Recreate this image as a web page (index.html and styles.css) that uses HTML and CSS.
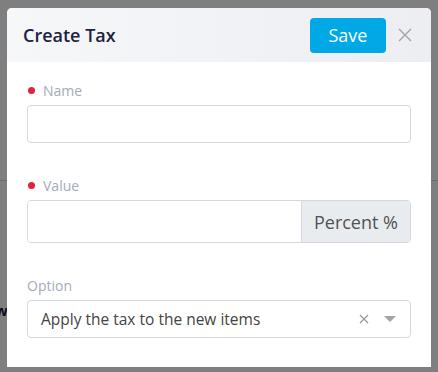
FILE: index.html
```html
<!DOCTYPE html>
<html lang="en">
<head>
    <meta charset="UTF-8">
    <meta name="viewport" content="width=device-width, initial-scale=1.0">
    <title>Create Tax</title>
    <link rel="stylesheet" href="styles.css">
</head>
<body>
    <!-- page behind the modal -->
    <div class="page">
        <div class="page-top"></div>
        <div class="page-row">New</div>
    </div>

    <div class="backdrop">
        <div class="modal">
            <div class="modal-header">
                <h2>Create Tax</h2>
                <button class="btn-save" type="button">Save</button>
                <span class="btn-close">
                    <svg width="14" height="14" viewBox="0 0 14 14"><path d="M1 1L13 13M13 1L1 13" stroke="#a3a3a3" stroke-width="1.4" fill="none"/></svg>
                </span>
            </div>
            <div class="modal-body">
                <div class="form-group">
                    <label class="required">Name</label>
                    <input type="text" class="field">
                </div>
                <div class="form-group">
                    <label class="required">Value</label>
                    <div class="input-group">
                        <input type="text" class="field">
                        <span class="addon">Percent %</span>
                    </div>
                </div>
                <div class="form-group">
                    <label>Option</label>
                    <div class="select">
                        <span class="select-value">Apply the tax to the new items</span>
                        <span class="select-clear">
                            <svg width="10" height="10" viewBox="0 0 10 10"><path d="M1 1L9 9M9 1L1 9" stroke="#999" stroke-width="1.3" fill="none"/></svg>
                        </span>
                        <span class="select-caret"></span>
                    </div>
                </div>
            </div>
        </div>
    </div>
</body>
</html>
```

FILE: styles.css
```css
body {
    margin: 0;
    font-family: "Open Sans", Arial, sans-serif;
    background: #fff;
    overflow: hidden;
}
.page-top {
    height: 180px;
    border-bottom: 1px solid #ddd;
}
.page-row {
    margin: 119px 0 0 -26px;
    font-weight: bold;
    font-size: 15px;
    color: #1e2240;
}
.backdrop {
    position: fixed;
    inset: 0;
    background: rgba(0, 0, 0, 0.5);
}
.modal {
    margin: 8px 7px 0;
    height: 359px;
    background: #fff;
    border-radius: 5px 5px 0 0;
    overflow: hidden;
}
.modal-header {
    display: flex;
    align-items: center;
    height: 54px;
    padding: 0 19px 0 16px;
    background: linear-gradient(to right, #f6f7f9, #eceef2);
}
.modal-header h2 {
    flex: 1;
    margin: 0;
    font-size: 18px;
    font-weight: 600;
    color: #1e2240;
}
.btn-save {
    width: 76px;
    height: 35px;
    border: none;
    border-radius: 4px;
    background: #00a8e6;
    color: #fff;
    font-family: inherit;
    font-size: 18px;
    padding: 0;
}
.btn-close {
    display: flex;
    margin-left: 12px;
}
.modal-body {
    padding: 19px 20px 0;
}
.form-group {
    margin-bottom: 33px;
}
label {
    display: flex;
    align-items: center;
    height: 19px;
    margin-bottom: 5px;
    font-size: 14px;
    color: #a4abb9;
}
label.required::before {
    content: "";
    width: 7px;
    height: 7px;
    border-radius: 50%;
    background: #e2233b;
    margin: 0 8px 0 1px;
}
.field {
    display: block;
    width: 100%;
    height: 38px;
    box-sizing: border-box;
    border: 1px solid #d4d8de;
    border-radius: 4px;
    font-family: inherit;
    font-size: 16px;
}
.input-group {
    display: flex;
    height: 43px;
    box-sizing: border-box;
    border: 1px solid #d4d8de;
    border-radius: 4px;
    overflow: hidden;
}
.input-group .field {
    flex: 1;
    height: 100%;
    border: none;
    border-radius: 0;
}
.addon {
    display: flex;
    align-items: center;
    padding: 0 12px;
    background: #e9ecef;
    border-left: 1px solid #d4d8de;
    color: #525252;
    font-size: 18px;
}
.select {
    display: flex;
    align-items: center;
    height: 38px;
    box-sizing: border-box;
    padding: 0 14px 0 13px;
    border: 1px solid #d4d8de;
    border-radius: 4px;
}
.select-value {
    flex: 1;
    font-size: 15.5px;
    color: #444;
}
.select-clear {
    display: flex;
    margin-right: 15px;
}
.select-caret {
    width: 0;
    height: 0;
    border-left: 6px solid transparent;
    border-right: 6px solid transparent;
    border-top: 6px solid #a3a3a3;
}
```
